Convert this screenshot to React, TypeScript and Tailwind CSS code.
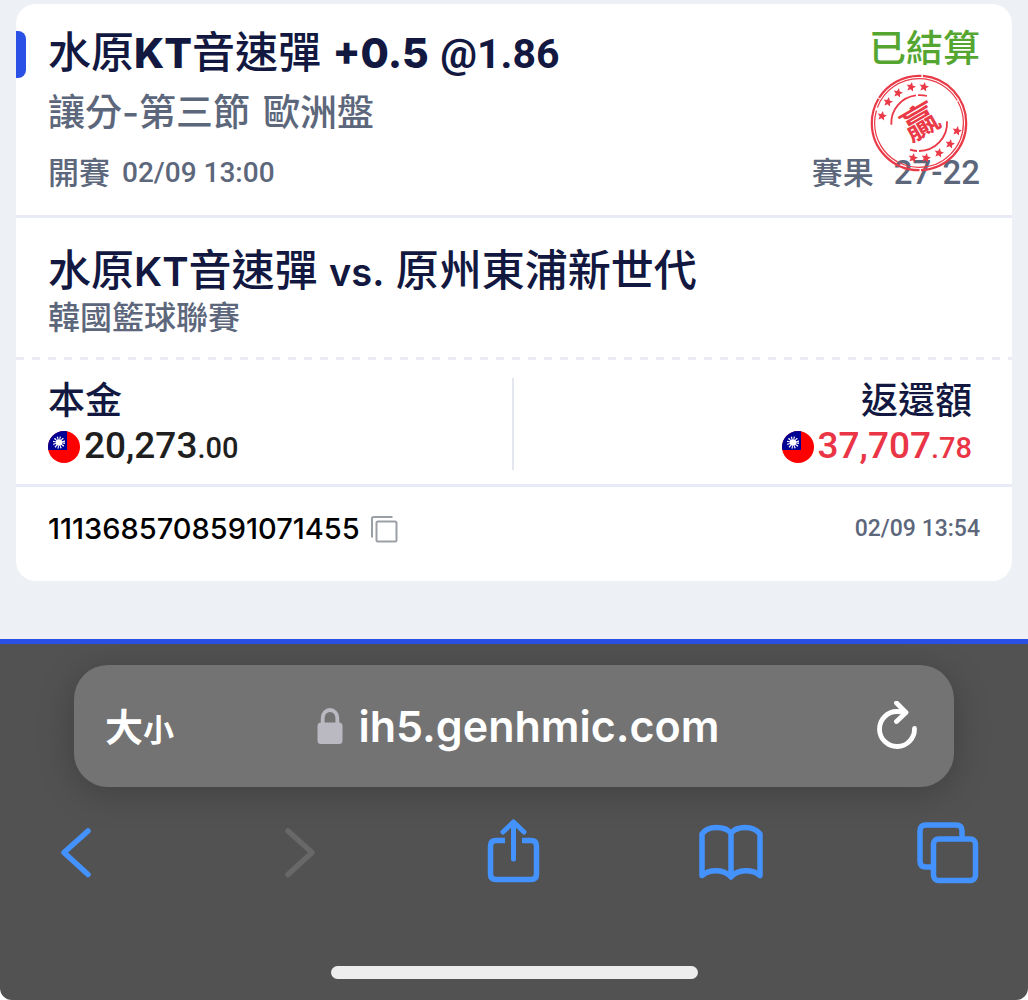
import type { ReactNode } from "react";

const CJK = "font-['Inter','Noto_Sans_CJK_TC',sans-serif]";
const DIN = "font-['Roboto',sans-serif]";

function star(cx: number, cy: number) {
  const pts: string[] = [];
  for (let i = 0; i < 10; i++) {
    const r = i % 2 === 0 ? 5 : 2.3;
    const a = (Math.PI / 5) * i - Math.PI / 2 + 0.2;
    pts.push(`${(cx + r * Math.cos(a)).toFixed(2)},${(cy + r * Math.sin(a)).toFixed(2)}`);
  }
  return pts.join(" ");
}

const STARS = [
  [-37, -7], [-31, -21], [-21, -30], [-8, -36], [5, -36],
  [38, 8], [31, 21], [20, 30], [7, 35], [-6, 35],
];

function WinStamp() {
  return (
    <svg viewBox="-50 -50 100 100" className="absolute top-[69px] right-[43px] size-[100px]" role="img" aria-label="贏">
      <g fill="none" stroke="#ea3a48">
        <circle r="47.200" strokeWidth="2.200" strokeDasharray="72 1.500 100 1 50 1.500" />
        <circle r="44.400" strokeWidth="1.200" strokeDasharray="90 2 60 3 100 1" />
        <path d="M-27.700 1.700A28 28 0 0 1-3-27.600M-1-27.800A28 28 0 0 1 8-27M28-1.700A28 28 0 0 1 0 28M-2 28A28 28 0 0 1-9 26.700" strokeWidth="1.800" />
      </g>
      {STARS.map(([x, y]) => (
        <polygon key={`${x},${y}`} points={star(x, y)} fill="#ea3a48" />
      ))}
      <text
        transform="translate(1 -1) rotate(-30)"
        y="13"
        textAnchor="middle"
        fill="#ea3a48"
        className="font-['Noto_Sans_CJK_TC',sans-serif] text-[36px] font-bold"
      >
        贏
      </text>
    </svg>
  );
}

function TaiwanFlag() {
  return (
    <svg viewBox="0 0 32 32" className="size-8 shrink-0" aria-hidden="true">
      <defs>
        <clipPath id="disc"><circle cx="16" cy="16" r="16" /></clipPath>
      </defs>
      <g clipPath="url(#disc)">
        <rect width="32" height="32" fill="#fe0000" />
        <rect width="19" height="19" fill="#000095" />
        <circle cx="11" cy="11.500" r="4.600" fill="none" stroke="#fff" strokeWidth="3" strokeDasharray="1.100 1.308" />
        <circle cx="11" cy="11.500" r="3.300" fill="#fff" />
      </g>
    </svg>
  );
}

function CopyIcon() {
  return (
    <svg viewBox="0 0 28 28" className="size-7" fill="none" stroke="#9b9fa6" strokeWidth="2" aria-hidden="true">
      <path d="M2 22.500V3.500Q2 2 3.500 2H22.500" />
      <rect x="6.500" y="6.500" width="20" height="20" rx="1.500" />
    </svg>
  );
}

function Amount({ whole, cents, color }: { whole: string; cents: string; color: string }) {
  return (
    <div className={`flex h-[46px] items-center gap-1 ${color}`}>
      <TaiwanFlag />
      <span className={`${DIN} text-[37px] leading-[46px] font-medium`}>
        {whole}
        <span className="text-[29px]">{cents}</span>
      </span>
    </div>
  );
}

function Ticket() {
  return (
    <article className={`${CJK} relative rounded-[20px] bg-white font-medium text-[#5d677b]`}>
      <span className="absolute top-[27px] left-0 h-[47px] w-[10px] rounded-r-[8px] bg-[#2b50e6]" />
      <header className="border-b-3 border-[#e8eaf5] px-8 pt-[19px] pb-3">
        <div className="flex h-[60px] items-center justify-between">
          <h1 className="text-[43px] leading-[60px] text-[#12183f]">
            水原<b className="text-[41px] font-extrabold">KT</b>音速彈{" "}
            <b className="text-[41px] font-extrabold">+0.5</b>{" "}
            <b className="font-['Roboto',sans-serif] text-[41px] font-bold">@1.86</b>
          </h1>
          <span className="pb-2 text-[37px] leading-[48px] text-[#55a630]">已結算</span>
        </div>
        <p className="flex h-[60px] items-center gap-[13px] text-[37px]">
          <span>讓分-第三節</span>
          <span>歐洲盤</span>
        </p>
        <div className="flex h-[60px] items-center justify-between text-[31px]">
          <p className="flex items-center gap-3">
            開賽 <time className={`${DIN} text-[28px]`}>02/09 13:00</time>
          </p>
          <p className="flex items-center gap-5">
            賽果 <span className={`${DIN} text-[33px]`}>27-22</span>
          </p>
        </div>
      </header>

      <section className="px-8 pt-[22px] pb-[21px]">
        <h2 className="flex h-[60px] items-center text-[43px] text-[#12183f]">
          <span>
            水原<span className="text-[40px] font-semibold">KT</span>音速彈{" "}
            <span className="text-[38px] font-semibold">vs.</span> 原州東浦新世代
          </span>
        </h2>
        <p className="text-[32px] leading-[36px]">韓國籃球聯賽</p>
      </section>

      <div className="h-[3px] bg-[repeating-linear-gradient(90deg,#ecebf5_0_8px,transparent_8px_16px)]" />

      <section className="grid grid-cols-2 border-b-3 border-[#e8eaf5] px-8 pt-[18px] pb-[14px]">
        <div className="flex flex-col border-r-2 border-[#e4e6f0]">
          <h3 className="text-[37px] leading-[46px] text-[#12183f]">本金</h3>
          <Amount whole="20,273" cents=".00" color="text-[#1f1f1f]" />
        </div>
        <div className="flex flex-col items-end pr-2">
          <h3 className="text-[37px] leading-[46px] text-[#12183f]">返還額</h3>
          <Amount whole="37,707" cents=".78" color="text-[#ea3546]" />
        </div>
      </section>

      <footer className="flex h-[94px] items-center justify-between px-8 pb-[10px]">
        <div className="flex items-center gap-[10px]">
          <span className="text-[29px] leading-8 text-black">1113685708591071455</span>
          <button type="button" aria-label="複製" className="cursor-pointer"><CopyIcon /></button>
        </div>
        <time className={`${DIN} text-[23px] leading-8`}>02/09 13:54</time>
      </footer>
    </article>
  );
}

function ToolButton({ label, disabled, children }: { label: string; disabled?: boolean; children: ReactNode }) {
  return (
    <button type="button" aria-label={label} disabled={disabled} className="size-[68px] text-[#4492fd] disabled:text-[#686868]">
      <svg
        viewBox="0 0 68 68"
        className="size-full"
        fill="none"
        stroke="currentColor"
        strokeWidth="5.500"
        strokeLinecap="round"
        strokeLinejoin="round"
        aria-hidden="true"
      >
        {children}
      </svg>
    </button>
  );
}

function BrowserBar() {
  return (
    <div className="flex flex-1 flex-col rounded-b-[12px] border-t-5 border-[#2b50e6] bg-[#525252]">
      <div className="px-[74px] pt-[21px]">
        <div className="flex h-[122px] items-center justify-between rounded-[34px] bg-[#737373] pr-8 pl-[31px] text-white shadow-[0_6px_36px_rgba(0,0,0,0.22)]">
          <button type="button" className="flex items-baseline font-['Noto_Sans_CJK_TC',sans-serif] leading-[48px] font-bold">
            <span className="text-[38px]">大</span>
            <span className="text-[31px]">小</span>
          </button>
          <a href="#" className={`${CJK} flex items-center gap-4 text-[43px] leading-[54px] font-semibold`}>
            <svg viewBox="0 0 26 36" className="h-9 w-[26px]" aria-hidden="true">
              <path d="M5.700 17V9.800a7.300 7.800 0 0 1 14.600 0V17" fill="none" stroke="#bab9c1" strokeWidth="3.800" />
              <rect x=".5" y="14.500" width="25" height="21.500" rx="3.500" fill="#bab9c1" />
            </svg>
            ih5.genhmic.com
          </a>
          <button type="button" aria-label="重新載入" className="flex w-[60px] justify-end">
            <svg viewBox="0 0 50 50" className="size-[50px]" fill="none" stroke="#fff" strokeWidth="4.800" strokeLinecap="round" strokeLinejoin="round" aria-hidden="true">
              <path d="M42.500 27.500A17.500 17.500 0 1 1 25 10.500q4 0 8.500 1" />
              <path d="M24.500 2 34 11.500 24.500 20.500" />
            </svg>
          </button>
        </div>
      </div>
      <nav className="flex justify-between pt-[31px] pr-[46px] pl-[42px]">
        <ToolButton label="上一頁"><path d="M46 13 22 34.500 46 56.500" /></ToolButton>
        <ToolButton label="下一頁" disabled><path d="M28 13 52 34.500 28 56.500" /></ToolButton>
        <ToolButton label="分享">
          <path d="M27 22.500H18q-5.500 0-5.500 5.500V56q0 5.500 5.500 5.500H53q5.500 0 5.500-5.500V28q0-5.500-5.500-5.500H44" strokeLinecap="butt" />
          <path d="M35.500 4V41M25 14 35.500 4 46 14" strokeWidth="5" />
        </ToolButton>
        <ToolButton label="書籤">
          <path d="M35 15C29 8 12 7 6 16V57.500C14 51 28 51 35 59C42 51 56 51 64 57.500V16C57 7 41 8 35 15ZM35 15V58" />
        </ToolButton>
        <ToolButton label="分頁">
          <rect x="19.500" y="21" width="42" height="41.500" rx="5" />
          <path d="M19 49H12q-6 0-6-6V13q0-6 6-6H42q6 0 6 6V20" strokeLinecap="butt" />
        </ToolButton>
      </nav>
      <div className="mx-auto mt-auto mb-[21px] h-[13px] w-[367px] rounded-full bg-[#ededed]" />
    </div>
  );
}

export default function App() {
  return (
    <main className="flex min-h-screen flex-col bg-white">
      <div className="relative bg-[#edf1f5] px-4 pt-1 pb-[58px]">
        <div className="relative">
          <Ticket />
          <WinStamp />
        </div>
      </div>
      <BrowserBar />
    </main>
  );
}
